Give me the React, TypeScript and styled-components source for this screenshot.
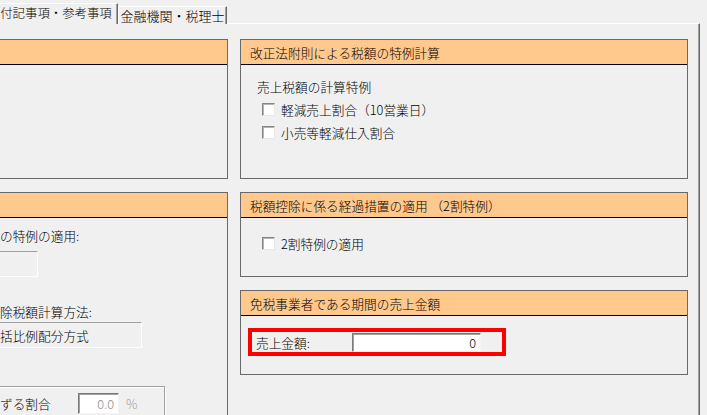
import styled, { createGlobalStyle } from "styled-components";

const GlobalStyle = createGlobalStyle`
  body {
    margin: 0;
    background: #f0f0f0;
    font-family: "Noto Sans CJK JP", "Noto Sans", sans-serif;
    font-weight: 300;
    color: #000;
  }
`;

const Screen = styled.div`
  width: 707px;
  height: 415px;
  overflow: hidden;
  background: #f0f0f0;
  display: flex;
  flex-direction: column;
`;

const TabStrip = styled.div`
  display: flex;
  align-items: flex-end;
  height: 24px;
  flex-shrink: 0;
`;

const Tab = styled.div<{ $active?: boolean; $w: number }>`
  box-sizing: border-box;
  width: ${(p) => p.$w}px;
  height: ${(p) => (p.$active ? 21 : 18)}px;
  margin-left: ${(p) => (p.$active ? -6 : 0)}px;
  position: ${(p) => (p.$active ? "relative" : "static")};
  z-index: ${(p) => (p.$active ? 1 : 0)};
  padding-bottom: ${(p) => (p.$active ? 2 : 1)}px;
  display: flex;
  align-items: center;
  justify-content: center;
  background: #f0f0f0;
  border-top: 1px solid #fff;
  border-left: 1px solid #fff;
  border-right: 1px solid #696969;
  box-shadow: inset -1px 0 0 #a0a0a0;
  font-size: ${(p) => (p.$active ? 12.4 : 13)}px;
  white-space: nowrap;
`;

const Page = styled.div`
  box-sizing: border-box;
  margin-top: -1px;
  margin-left: -1px;
  width: 701px;
  flex: 1;
  border-top: 1px solid #fff;
  border-right: 1px solid #696969;
  box-shadow: inset -1px 0 0 #a0a0a0;
  padding: 15px 12px 0 0;
  display: grid;
  grid-template-columns: 229px 448px;
  column-gap: 12px;
  align-items: start;
`;

const Column = styled.div`
  display: flex;
  flex-direction: column;
  gap: 13px;
`;

const Panel = styled.section<{ $h: number }>`
  box-sizing: border-box;
  height: ${(p) => p.$h}px;
  border: 1px solid #696969;
  display: flex;
  flex-direction: column;
`;

const PanelHeader = styled.div`
  height: 24px;
  flex-shrink: 0;
  background: #ffc88c;
  border-bottom: 1px solid #000;
  padding-left: 9px;
  display: flex;
  align-items: center;
  font-size: 12.7px;
  white-space: nowrap;
`;

const PanelBody = styled.div<{ $pt: number; $pl: number }>`
  padding: ${(p) => p.$pt}px 0 0 ${(p) => p.$pl}px;
  display: flex;
  flex-direction: column;
  align-items: flex-start;
  font-size: 12.7px;
  white-space: nowrap;
`;

const Row = styled.div<{ $indent?: number }>`
  height: 23px;
  display: flex;
  align-items: center;
  padding-left: ${(p) => p.$indent ?? 0}px;
`;

const CheckBox = styled.span`
  box-sizing: border-box;
  width: 13px;
  height: 13px;
  margin-right: 6px;
  background: #fff;
  border: 1px solid;
  border-color: #858585 #e8e8e8 #e8e8e8 #858585;
  box-shadow: inset 1px 1px 0 #b4b4b4;
`;

const Label = styled.div<{ $mt?: number }>`
  line-height: 16px;
  margin-top: ${(p) => p.$mt ?? 0}px;
`;

const FlatField = styled.div<{ $w: number; $mt: number }>`
  box-sizing: border-box;
  width: ${(p) => p.$w}px;
  height: 26px;
  margin-left: -2px;
  margin-top: ${(p) => p.$mt}px;
  padding-left: 1px;
  border: 1px solid;
  border-color: #a0a0a0 #fff #fff #a0a0a0;
  display: flex;
  align-items: center;
`;

const GroupBox = styled.div`
  box-sizing: border-box;
  width: 167px;
  height: 60px;
  margin-left: -2px;
  margin-top: 38px;
  border: 1px solid #a0a0a0;
  box-shadow: inset 1px 1px 0 #fff, 1px 1px 0 #fff;
  padding: 6px 0 0 1px;
`;

const GroupRow = styled.div`
  display: flex;
  align-items: center;
  height: 21px;
`;

const RatioLabel = styled.span`
  width: 78px;
`;

const SunkenInput = styled.div<{ $w: number; $h: number; $muted?: boolean }>`
  box-sizing: border-box;
  width: ${(p) => p.$w}px;
  height: ${(p) => p.$h}px;
  background: #fff;
  border: 1px solid;
  border-color: #7a7a7a #f4f4f4 #f4f4f4 #7a7a7a;
  box-shadow: inset 1px 1px 0 #a0a0a0;
  padding-right: 4px;
  display: flex;
  align-items: center;
  justify-content: flex-end;
  color: ${(p) => (p.$muted ? "#8a8a8a" : "#000")};
  font-size: 12.7px;
`;

const Unit = styled.span`
  margin-left: 7px;
  color: #a0a0a0;
`;

const Highlight = styled.div`
  box-sizing: border-box;
  width: 258px;
  height: 28px;
  border: 4px solid #ff0000;
  display: flex;
  align-items: center;
`;

const AmountLabel = styled.span`
  width: 96px;
  padding-left: 4px;
`;

export default function App() {
  return (
    <>
      <GlobalStyle />
      <Screen>
        <TabStrip>
          <Tab $active $w={124}>付記事項・参考事項</Tab>
          <Tab $w={109}>金融機関・税理士</Tab>
        </TabStrip>
        <Page>
          <Column>
            <Panel $h={140}>
              <PanelHeader />
            </Panel>
            <Panel $h={260}>
              <PanelHeader />
              <PanelBody $pt={10} $pl={0}>
                <Label>の特例の適用:</Label>
                <FlatField $w={40} $mt={7} />
                <Label $mt={27}>除税額計算方法:</Label>
                <FlatField $w={144} $mt={2}>括比例配分方式</FlatField>
                <GroupBox>
                  <GroupRow>
                    <RatioLabel>ずる割合</RatioLabel>
                    <SunkenInput $w={41} $h={21} $muted>0.0</SunkenInput>
                    <Unit>%</Unit>
                  </GroupRow>
                </GroupBox>
              </PanelBody>
            </Panel>
          </Column>
          <Column>
            <Panel $h={140}>
              <PanelHeader>改正法附則による税額の特例計算</PanelHeader>
              <PanelBody $pt={10} $pl={16}>
                <Row>売上税額の計算特例</Row>
                <Row $indent={5}>
                  <CheckBox />
                  軽減売上割合（10営業日）
                </Row>
                <Row $indent={5}>
                  <CheckBox />
                  小売等軽減仕入割合
                </Row>
              </PanelBody>
            </Panel>
            <Panel $h={85}>
              <PanelHeader>税額控除に係る経過措置の適用 （2割特例）</PanelHeader>
              <PanelBody $pt={14} $pl={21}>
                <Row>
                  <CheckBox />
                  2割特例の適用
                </Row>
              </PanelBody>
            </Panel>
            <Panel $h={85}>
              <PanelHeader>免税事業者である期間の売上金額</PanelHeader>
              <PanelBody $pt={12} $pl={7}>
                <Highlight>
                  <AmountLabel>売上金額:</AmountLabel>
                  <SunkenInput $w={129} $h={19}>0</SunkenInput>
                </Highlight>
              </PanelBody>
            </Panel>
          </Column>
        </Page>
      </Screen>
    </>
  );
}
